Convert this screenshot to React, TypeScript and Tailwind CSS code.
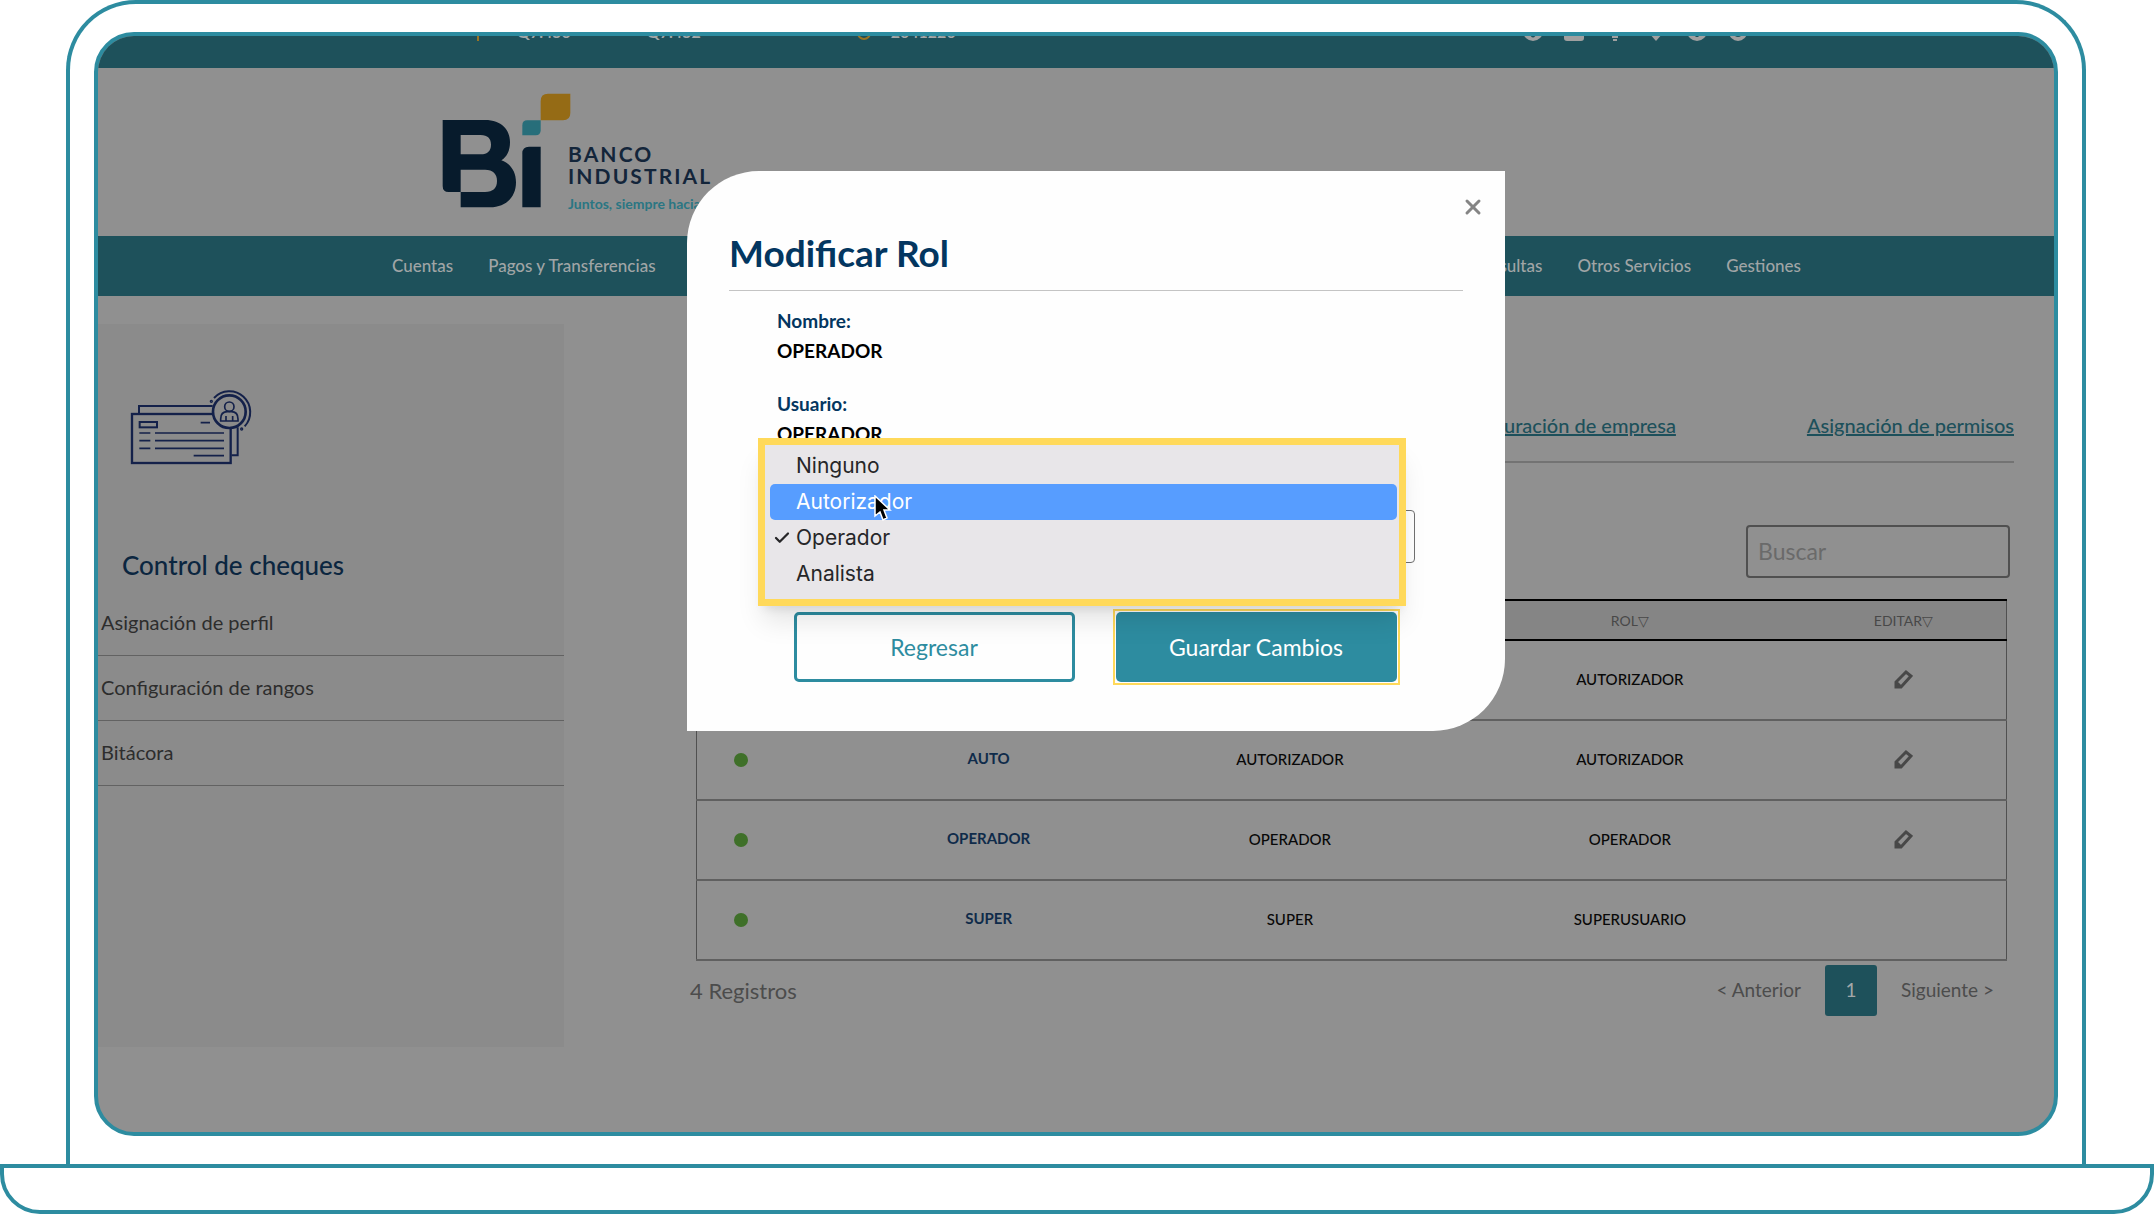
import { useState } from 'react';
import { Check, X } from 'lucide-react';

interface UserRow {
  id: string;
  name: string;
  user: string;
  role: string;
  editable: boolean;
}

const users: UserRow[] = [
  { id: 'autorizador', name: 'AUTORIZADOR', user: 'AUTORIZADOR', role: 'AUTORIZADOR', editable: true },
  { id: 'auto', name: 'AUTO', user: 'AUTORIZADOR', role: 'AUTORIZADOR', editable: true },
  { id: 'operador', name: 'OPERADOR', user: 'OPERADOR', role: 'OPERADOR', editable: true },
  { id: 'super', name: 'SUPER', user: 'SUPER', role: 'SUPERUSUARIO', editable: false },
];

const roles = ['Ninguno', 'Autorizador', 'Operador', 'Analista'];
const sideLinks = ['Asignación de perfil', 'Configuración de rangos', 'Bitácora'];

const BankLogo = () => (
  <div className="flex">
    <svg width="130" height="116" viewBox="36 40 390 348" aria-hidden="true">
      <path
        fill="#071b2c"
        fillRule="evenodd"
        d="M38 121H165C215 121 240 150 240 188C240 214 230 232 214 242C240 251 258 274 258 308C258 354 226 383 180 383H92V337H56Q38 337 38 319ZM92 166V224H152C173 224 183 213 183 195C183 177 173 166 152 166ZM92 270V337H165C189 337 201 325 201 304C201 283 189 270 165 270Z"
      />
      <path fill="#071b2c" d="M277 221Q277 201 297 201H332V383H277Z" />
      <path fill="#276e7a" d="M277 137Q277 122 292 122H332V152Q332 167 317 167H277Z" />
      <path fill="#956b15" d="M332 64Q332 42 354 42H421V100Q421 122 399 122H332Z" />
    </svg>
    <div className="-ml-1 pt-[50px] text-[#13253a]">
      <p className="text-[21px] leading-[22px] font-bold tracking-widest">
        BANCO
        <br />
        INDUSTRIAL
      </p>
      <p className="mt-2 text-[14px] leading-[18px] font-bold whitespace-nowrap text-[#2a7683]">Juntos, siempre hacia adelante</p>
    </div>
  </div>
);

const ChequesIcon = () => (
  <svg width="122" height="77" viewBox="30 54 366 231" fill="none" stroke="#14214a" strokeWidth="6" aria-hidden="true">
    <path d="M278 108H57V131M353 172V256H335" />
    <rect x="36" y="132" width="296" height="147" strokeWidth="7" />
    <rect x="59" y="156" width="52" height="16" />
    <path d="M242 158H270M58 189H91M105 189H312M58 212H91M105 212H312M58 235H91M105 235H312M221 257H312" strokeWidth="5" />
    <circle cx="328" cy="125" r="49" fill="#8b8b8b" strokeWidth="8" />
    <path d="M282 84A62 62 0 1 1 374 169" />
    <circle cx="274" cy="94" r="2" />
    <circle cx="365" cy="177" r="2" />
    <circle cx="328" cy="110" r="14" strokeWidth="5" />
    <path d="M302 153V147Q302 125 322 125H334Q354 125 354 147V153ZM318 153V138M338 153V138" strokeWidth="5" />
  </svg>
);

const PencilIcon = () => (
  <svg width="20" height="20" viewBox="0 0 20 20" fill="none" stroke="#484848" strokeWidth="3" aria-hidden="true">
    <path d="M3 17V12L13 2L18 6L8 17ZM3 12L8 17" />
  </svg>
);

const TopBar = () => (
  <div className="flow-root h-8 bg-[#1e515b] text-[#a3a8a9]">
    <div className="-mt-4 flex h-[21px] items-end pr-[306px] pl-[378px]">
      <svg width="5" height="20" aria-hidden="true">
        <path d="M2 0V20" stroke="#9a7424" strokeWidth="2" />
      </svg>
      <span className="ml-9 text-[16px] leading-[18px] font-bold">Q7.450</span>
      <span className="ml-[76px] text-[16px] leading-[18px] font-bold">Q7.452</span>
      <svg className="ml-[156px]" width="14" height="20" fill="none" aria-hidden="true">
        <circle cx="7" cy="12" r="6" stroke="#9a7424" strokeWidth="2" />
      </svg>
      <span className="ml-[20px] text-[16px] leading-[18px] font-bold">2041220</span>
      <div className="ml-auto flex gap-[21px]">
        <svg width="20" height="20" aria-hidden="true">
          <circle cx="10" cy="10" r="10" fill="#a0a0a0" />
          <path d="M6 12Q10 21 14 12" fill="#1e515b" />
        </svg>
        <svg width="20" height="20" aria-hidden="true">
          <rect width="20" height="20" rx="3" fill="#a0a0a0" />
        </svg>
        <svg width="20" height="20" aria-hidden="true">
          <path d="M6 8H14M6 12H14M7 16H13M8 19H12" stroke="#a0a0a0" strokeWidth="2" />
        </svg>
        <svg width="20" height="20" aria-hidden="true">
          <path d="M10 20L3 12V4H17V12Z" fill="#a0a0a0" />
        </svg>
        <svg width="20" height="20" aria-hidden="true">
          <circle cx="10" cy="10" r="10" fill="#a0a0a0" />
          <path d="M10 8V16" stroke="#1e515b" strokeWidth="3" />
        </svg>
        <svg width="20" height="20" fill="none" aria-hidden="true">
          <circle cx="10" cy="11" r="7" stroke="#a0a0a0" strokeWidth="4" />
        </svg>
      </div>
    </div>
  </div>
);

const MainNav = () => (
  <nav className="flex h-[60px] items-center gap-[35px] bg-[#1e515b] pr-[253px] pl-[294px] text-[17px] font-medium text-[#a0a5a6]">
    <a href="#cuentas">Cuentas</a>
    <a href="#pagos">Pagos y Transferencias</a>
    <a href="#consultas" className="ml-auto">Consultas</a>
    <a href="#servicios">Otros Servicios</a>
    <a href="#gestiones">Gestiones</a>
  </nav>
);

const Sidebar = () => (
  <aside className="mt-7 h-[723px] w-[466px] shrink-0 bg-[#8b8b8b] pt-16">
    <div className="pl-8">
      <ChequesIcon />
    </div>
    <h2 className="mt-[84px] pl-6 text-[26px] leading-8 font-medium text-[#0b2640]">Control de cheques</h2>
    <ul className="mt-[10px] text-[20px] text-[#2d2d2d]">
      {sideLinks.map((link) => (
        <li key={link} className="border-b border-[#626262]">
          <a href="#perfil" className="flex h-16 items-center pb-[2px] pl-[3px]">{link}</a>
        </li>
      ))}
    </ul>
  </aside>
);

const UsersTable = () => (
  <table className="w-full table-fixed border-collapse border border-[#505050] text-center text-[15px] text-[#080808]">
    <colgroup>
      <col className="w-[12.2%]" />
      <col className="w-[20.2%]" />
      <col className="w-[25.8%]" />
      <col className="w-[26.1%]" />
      <col className="w-[15.7%]" />
    </colgroup>
    <thead>
      <tr className="h-10 border-t-2 border-b-2 border-t-black border-b-black bg-[#858585] text-[14px] text-[#484848]">
        <th className="font-normal">ESTADO▽</th>
        <th className="font-normal">NOMBRE▽</th>
        <th className="font-normal">USUARIO▽</th>
        <th className="font-normal">ROL▽</th>
        <th className="font-normal">EDITAR▽</th>
      </tr>
    </thead>
    <tbody>
      {users.map((row) => (
        <tr key={row.id} className="h-20 border-b-2 border-[#606060]">
          <td className="pl-[37px]">
            <span className="block size-[14px] rounded-full bg-[#3f7029]" />
          </td>
          <td className="pb-[3px] font-bold text-[#0f2b4a]">{row.name}</td>
          <td className="pb-px font-medium">{row.user}</td>
          <td className="pb-px font-medium">{row.role}</td>
          <td className="pb-[3px]">
            {row.editable && (
              <button type="button" aria-label={`Editar ${row.name}`} className="align-middle">
                <PencilIcon />
              </button>
            )}
          </td>
        </tr>
      ))}
    </tbody>
  </table>
);

const RoleModal = () => {
  const [role, setRole] = useState('Operador');

  return (
    <div
      role="dialog"
      aria-labelledby="modal-title"
      className="w-[818px] rounded-tl-[72px] rounded-br-[72px] bg-[#fefefe] px-[42px] pb-[49px]"
    >
      <div className="flex h-[120px] items-start justify-between border-b border-[#c4c4c4] pt-6">
        <h1 id="modal-title" className="pt-8 text-[37px] leading-[52px] font-bold text-[#033660]">Modificar Rol</h1>
        <button type="button" aria-label="Cerrar" className="-mr-[22px] text-[#858585]">
          <X size={24} strokeWidth={3} />
        </button>
      </div>

      <div className="px-[48px] pt-[15px] text-[19px] leading-[30px]">
        <dl className="font-bold">
          <dt className="text-[#033660]">Nombre:</dt>
          <dd className="text-black">OPERADOR</dd>
          <dt className="mt-[23px] text-[#033660]">Usuario:</dt>
          <dd className="text-black">OPERADOR</dd>
        </dl>
        <div className="relative mt-[61px]">
          <select
            aria-label="Rol"
            value={role}
            onChange={(e) => setRole(e.target.value)}
            className="h-[53px] w-full appearance-none rounded-[4px] border border-[#707070] px-3"
          >
            {roles.map((r) => (
              <option key={r}>{r}</option>
            ))}
          </select>

          {/* Open list of roles */}
          <ul
            role="listbox"
            className="absolute -top-[72px] right-[9px] -left-[19px] z-10 border-[7px] border-[#ffd95a] bg-[#e8e6e9] pt-[3px] pr-[2px] pb-[7px] pl-[5px] font-['Inter',sans-serif] text-[21px] text-[#262628] shadow-xl"
          >
            {roles.map((r) => (
              <li
                key={r}
                role="option"
                aria-selected={r === role}
                className={
                  r === 'Autorizador'
                    ? 'flex h-9 items-center rounded-[5px] bg-[#579dff] pl-[3px] text-white'
                    : 'flex h-9 items-center pl-[3px]'
                }
              >
                <span className="w-[23px]">{r === role && <Check size={18} strokeWidth={3} />}</span>
                {r}
              </li>
            ))}
            <svg className="absolute top-[50px] left-[109px]" width="18" height="27" viewBox="0 0 18 27" aria-hidden="true">
              <path d="M1 1V21L6 17L9 25L13 23L10 15H16Z" fill="#000" stroke="#fff" strokeWidth="1.5" />
            </svg>
          </ul>
        </div>
      </div>

      <div className="mt-[49px] flex justify-center gap-[41px] pr-[2px] text-[23px]">
        <button type="button" className="h-[70px] w-[281px] rounded-[5px] border-[3px] border-[#2d8ca0] text-[#2d8ca0]">
          Regresar
        </button>
        <div className="-m-[3px] border-2 border-[#ffd95a] p-px">
          <button type="button" className="h-[70px] w-[281px] rounded-[5px] bg-[#2d8ca0] text-white">
            Guardar Cambios
          </button>
        </div>
      </div>
    </div>
  );
};

export default function App() {
  return (
    <div className="flex min-h-screen flex-col bg-white font-['Lato',sans-serif]">
      {/* Laptop lid */}
      <div className="mr-[68px] ml-[66px] flex flex-1 flex-col rounded-t-[70px] border-x-4 border-t-4 border-[#2d8ca0] px-6 py-7">
        <div className="relative flex-1 overflow-hidden rounded-[40px] border-4 border-[#2d8ca0] bg-[#909090]">
          <TopBar />
          <header className="h-[168px] pt-[25px] pl-[344px]">
            <BankLogo />
          </header>
          <MainNav />

          <div className="flex gap-[126px] pr-10">
            <Sidebar />
            <main className="min-w-0 flex-1">
              <div className="mt-[100px] flex h-[67px] justify-end gap-[131px] border-b-2 border-[#737373] pt-[14px] text-[20px] font-medium text-[#1d505b]">
                <a href="#empresa" className="underline">Configuración de empresa</a>
                <a href="#permisos" className="underline">Asignación de permisos</a>
              </div>
              <div className="mt-[62px] flex justify-end pr-1">
                <input
                  type="search"
                  aria-label="Buscar"
                  placeholder="Buscar"
                  className="h-[53px] w-[264px] rounded-[4px] border-2 border-[#505050] px-[10px] pb-[2px] text-[23px] placeholder:text-[#6a6a6a]"
                />
              </div>
              <div className="mt-[21px] pr-[7px] pl-[6px]">
                <UsersTable />
              </div>
              <div className="mt-1 flex items-center justify-between pr-5 text-[#4c4c4c]">
                <p className="text-[22px]">4 Registros</p>
                <div className="flex items-center gap-6 text-[19px]">
                  <button type="button">&lt; Anterior</button>
                  <button type="button" className="h-[51px] w-[52px] rounded-[3px] bg-[#1e515b] text-[#a3a8a9]">1</button>
                  <button type="button">Siguiente &gt;</button>
                </div>
              </div>
            </main>
          </div>

          <div className="absolute inset-0 flex items-start justify-center pt-[135px] pl-10">
            <RoleModal />
          </div>
        </div>
      </div>

      {/* Laptop base */}
      <div className="h-[50px] rounded-b-[40px] border-4 border-[#2d8ca0]" />
    </div>
  );
}
